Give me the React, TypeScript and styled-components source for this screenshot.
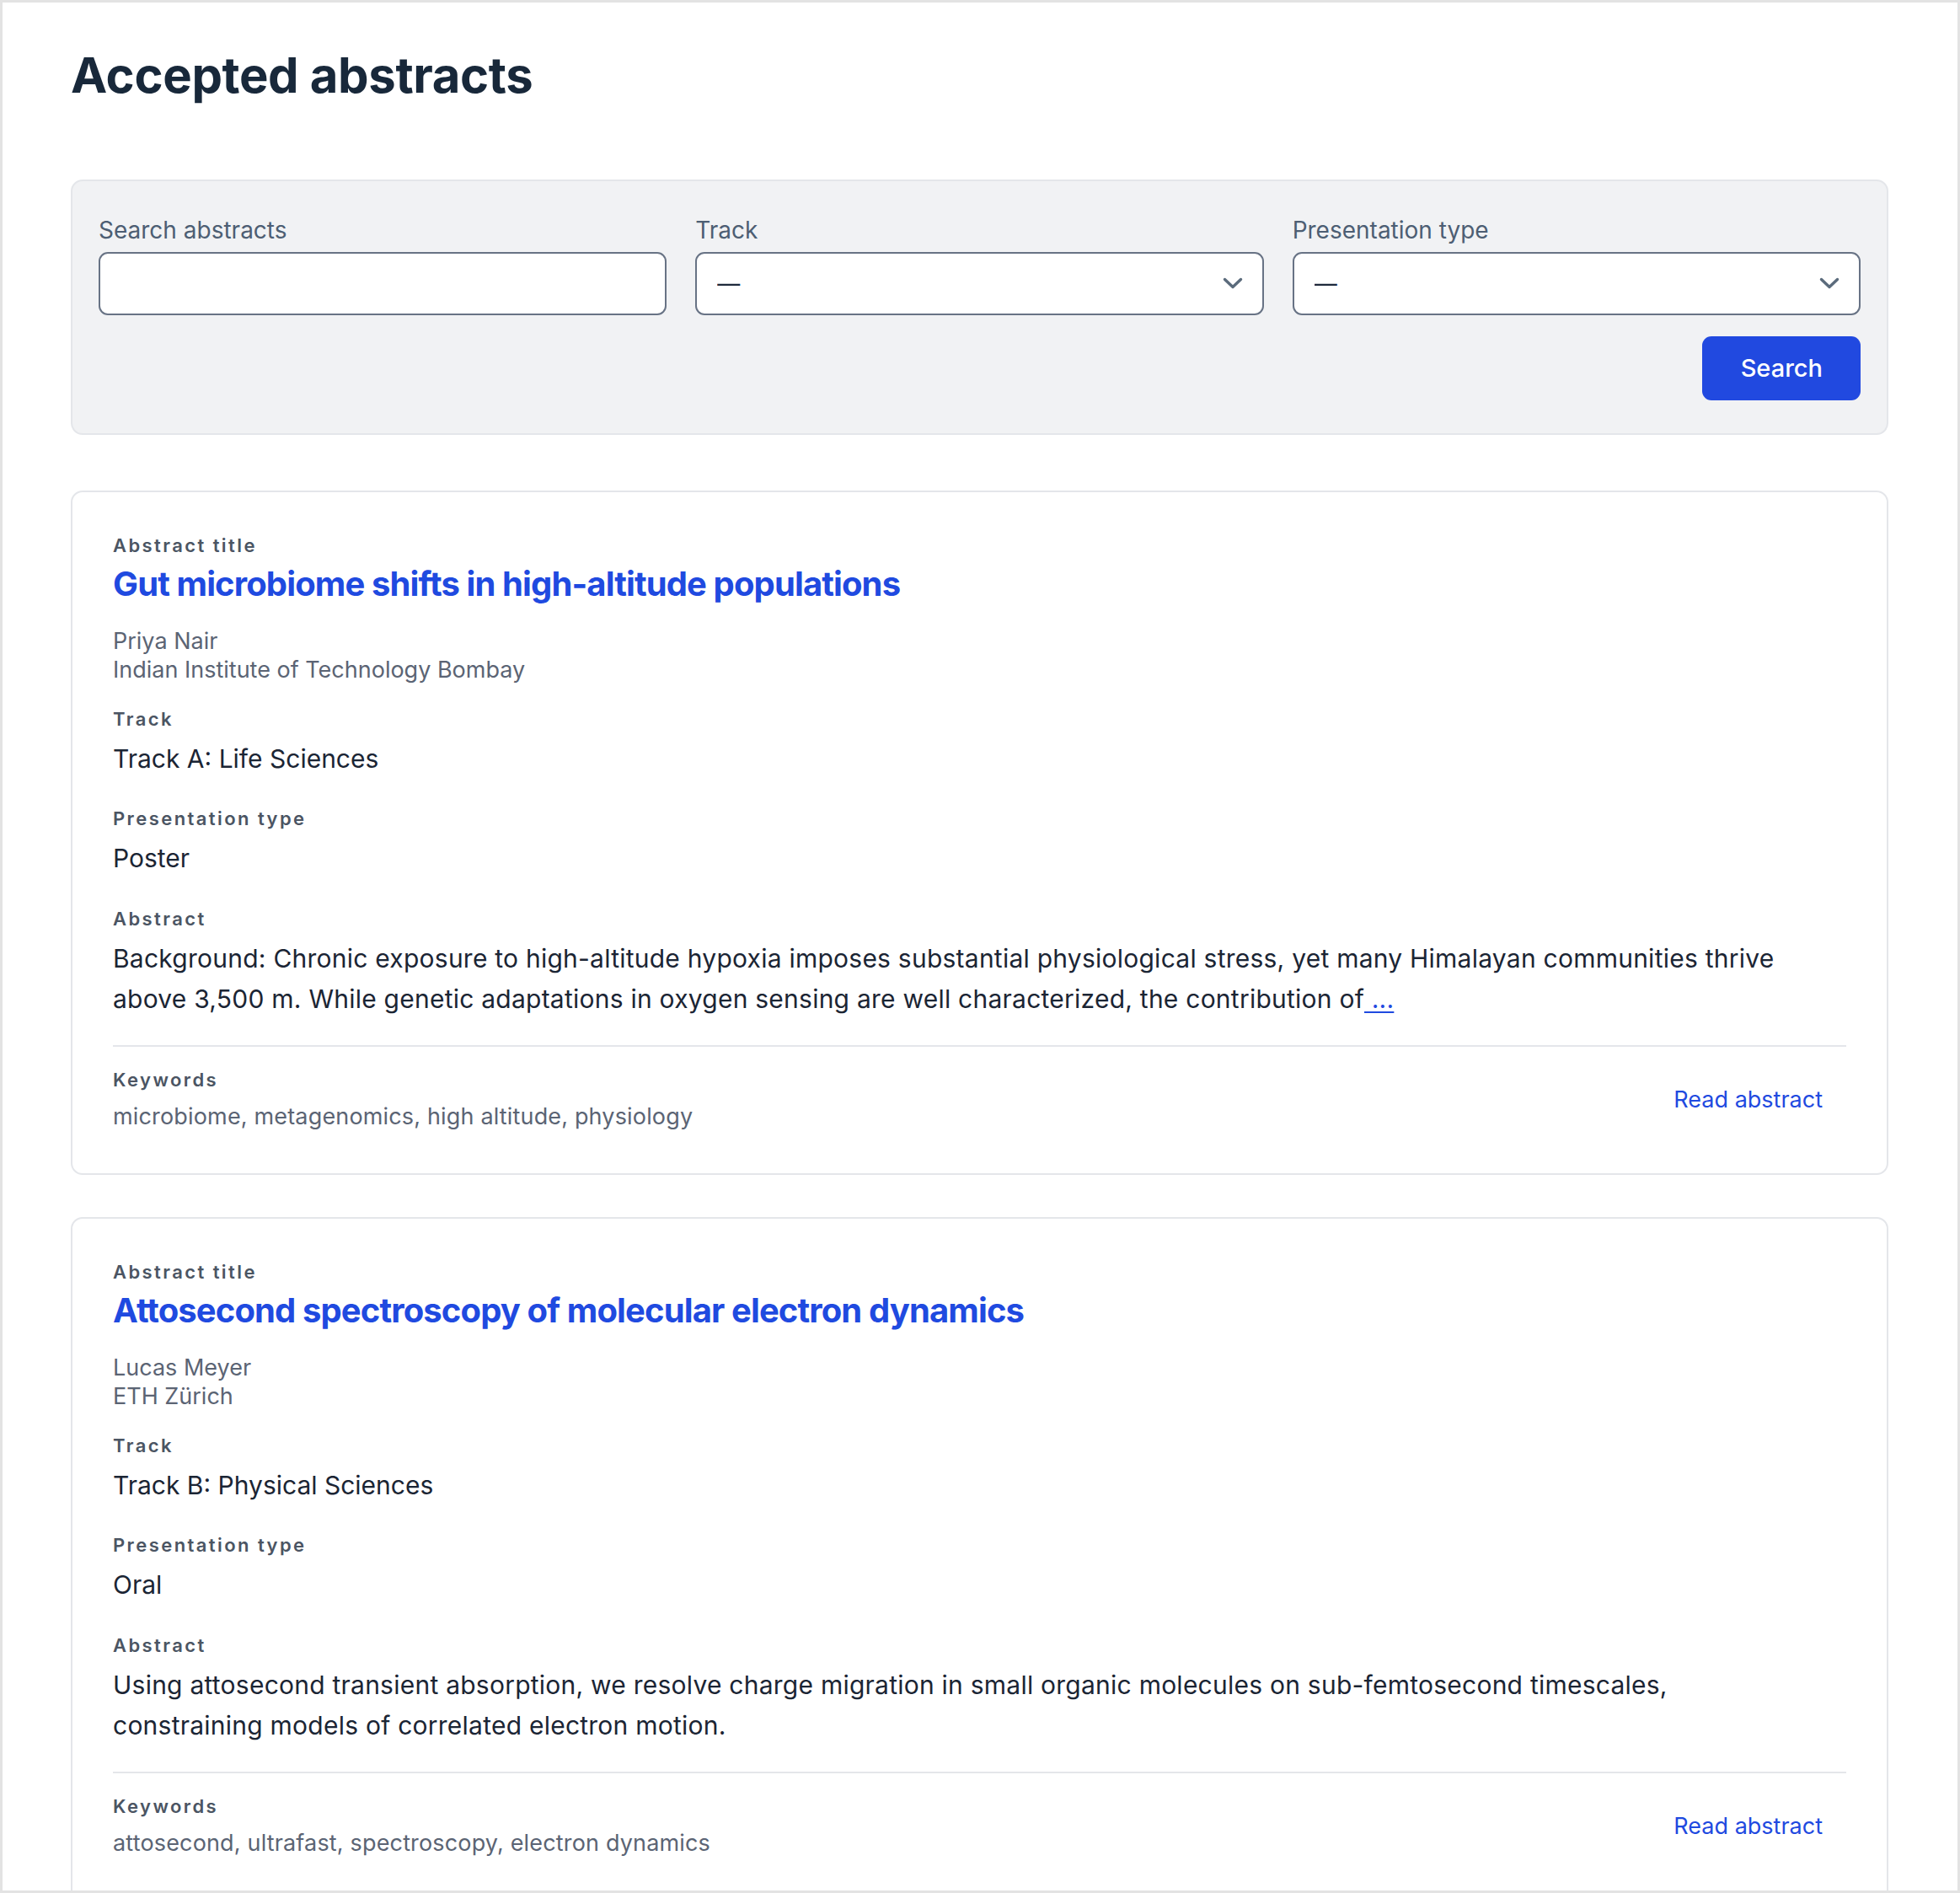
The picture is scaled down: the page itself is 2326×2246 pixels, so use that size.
import React from "react";
import styled, { createGlobalStyle } from "styled-components";

const Global = createGlobalStyle`
  html, body { margin: 0; padding: 0; background: #ffffff; }
  * { box-sizing: border-box; }
  body { font-family: Inter, "Noto Sans", "Liberation Sans", sans-serif; }
`;

const Frame = styled.div`
  height: 100vh;
  border: 3px solid #e3e3e3;
  overflow: hidden;
  background: #ffffff;
`;

const Page = styled.main`
  padding: 52px 82px 0 81px;
`;

const Heading = styled.h1`
  margin: 0;
  font-size: 58px;
  line-height: 1.2;
  font-weight: 700;
  letter-spacing: -0.006em;
  color: #18283a;
`;

const FilterPanel = styled.form`
  margin-top: 88px;
  background: #f1f2f4;
  border: 2px solid #e4e6ea;
  border-radius: 14px;
  padding: 40px 31px 39px;
`;

const FilterGrid = styled.div`
  display: grid;
  grid-template-columns: repeat(3, 1fr);
  column-gap: 34px;
`;

const Field = styled.label`
  display: flex;
  flex-direction: column;
  gap: 8px;
`;

const FieldLabel = styled.span`
  font-size: 28px;
  line-height: 36px;
  color: #4d5e73;
`;

const TextInput = styled.input`
  height: 75px;
  border: 2px solid #687385;
  border-radius: 11px;
  background: #ffffff;
  padding: 0 24px;
  font-family: inherit;
  font-size: 28px;
  color: #1e293b;
  outline: none;
`;

const SelectWrap = styled.div`
  position: relative;
`;

const Select = styled.select`
  appearance: none;
  -webkit-appearance: none;
  width: 100%;
  height: 75px;
  border: 2px solid #687385;
  border-radius: 11px;
  background: #ffffff;
  padding: 0 70px 0 24px;
  font-family: inherit;
  font-size: 27px;
  color: #1e293b;
  outline: none;
`;

const Chevron = styled.svg`
  position: absolute;
  right: 24px;
  top: 50%;
  transform: translateY(-50%);
  pointer-events: none;
`;

const ActionRow = styled.div`
  display: flex;
  justify-content: flex-end;
  margin-top: 25px;
`;

const SearchButton = styled.button`
  height: 76px;
  padding: 0 45px 0 46px;
  border: none;
  border-radius: 11px;
  background: #2149e0;
  color: #ffffff;
  font-family: inherit;
  font-size: 29px;
  font-weight: 500;
  cursor: pointer;
`;

const List = styled.section`
  margin-top: 66px;
  display: flex;
  flex-direction: column;
  gap: 50px;
`;

const Card = styled.article`
  border: 2px solid #e4e6ea;
  border-radius: 14px;
  padding: 48px 48px 47px 48px;
  background: #ffffff;
`;

const SmallLabel = styled.div`
  font-size: 22px;
  line-height: 30px;
  font-weight: 600;
  letter-spacing: 0.11em;
  color: #4b5563;
`;

const Title = styled.a`
  display: block;
  margin-top: 5px;
  font-size: 40px;
  line-height: 52px;
  font-weight: 700;
  letter-spacing: -0.022em;
  color: #1f4ae0;
  text-decoration: none;
`;

const Authors = styled.div`
  margin-top: 25px;
  font-size: 27px;
  line-height: 34px;
  color: #5b6474;
`;

const Group = styled.div<{ $gap: number }>`
  margin-top: ${(p) => p.$gap}px;
  display: flex;
  flex-direction: column;
  gap: 8px;
`;

const Value = styled.div`
  font-size: 30px;
  line-height: 48px;
  color: #1b2534;
`;

const AbstractText = styled.p`
  margin: 0;
  max-width: 1984px;
  font-size: 30px;
  line-height: 48px;
  letter-spacing: 0.008em;
  color: #1b2534;
`;

const More = styled.a`
  color: #1f4ae0;
  text-decoration: underline;
  text-decoration-thickness: 2px;
  text-underline-offset: 4px;
`;

const Footer = styled.div`
  margin-top: 31px;
  border-top: 2px solid #e4e6ea;
  padding-top: 24px;
  display: flex;
  align-items: center;
  justify-content: space-between;
`;

const Keywords = styled.div`
  display: flex;
  flex-direction: column;
  gap: 9px;
`;

const KeywordText = styled.div`
  font-size: 27px;
  line-height: 40px;
  letter-spacing: 0.006em;
  color: #5b6474;
`;

const ReadLink = styled.a`
  padding: 8px 28px;
  font-size: 27px;
  line-height: 40px;
  color: #1f4ae0;
  text-decoration: none;
`;

type Abstract = {
  title: string;
  author: string;
  affiliation: string;
  track: string;
  type: string;
  text: string;
  truncated: boolean;
  keywords: string;
};

const abstracts: Abstract[] = [
  {
    title: "Gut microbiome shifts in high-altitude populations",
    author: "Priya Nair",
    affiliation: "Indian Institute of Technology Bombay",
    track: "Track A: Life Sciences",
    type: "Poster",
    text:
      "Background: Chronic exposure to high-altitude hypoxia imposes substantial physiological stress, yet many Himalayan communities thrive above 3,500 m. While genetic adaptations in oxygen sensing are well characterized, the contribution of",
    truncated: true,
    keywords: "microbiome, metagenomics, high altitude, physiology",
  },
  {
    title: "Attosecond spectroscopy of molecular electron dynamics",
    author: "Lucas Meyer",
    affiliation: "ETH Zürich",
    track: "Track B: Physical Sciences",
    type: "Oral",
    text:
      "Using attosecond transient absorption, we resolve charge migration in small organic molecules on sub-femtosecond timescales, constraining models of correlated electron motion.",
    truncated: false,
    keywords: "attosecond, ultrafast, spectroscopy, electron dynamics",
  },
];

const ChevronIcon = () => (
  <Chevron width="26" height="18" viewBox="0 0 26 18" fill="none">
    <path d="M3.5 4.5 L13 13.5 L22.5 4.5" stroke="#5b6b7c" strokeWidth="3.4" strokeLinecap="round" strokeLinejoin="round" />
  </Chevron>
);

const SelectField = ({ label }: { label: string }) => (
  <Field>
    <FieldLabel>{label}</FieldLabel>
    <SelectWrap>
      <Select defaultValue="">
        <option value="">—</option>
      </Select>
      <ChevronIcon />
    </SelectWrap>
  </Field>
);

const AbstractCard = ({ a }: { a: Abstract }) => (
  <Card>
    <SmallLabel>Abstract title</SmallLabel>
    <Title href="#">{a.title}</Title>
    <Authors>
      <div>{a.author}</div>
      <div>{a.affiliation}</div>
    </Authors>
    <Group $gap={26}>
      <SmallLabel>Track</SmallLabel>
      <Value>{a.track}</Value>
    </Group>
    <Group $gap={32}>
      <SmallLabel>Presentation type</SmallLabel>
      <Value>{a.type}</Value>
    </Group>
    <Group $gap={33}>
      <SmallLabel>Abstract</SmallLabel>
      <AbstractText>
        {a.text}
        {a.truncated && <More href="#"> ...</More>}
      </AbstractText>
    </Group>
    <Footer>
      <Keywords>
        <SmallLabel>Keywords</SmallLabel>
        <KeywordText>{a.keywords}</KeywordText>
      </Keywords>
      <ReadLink href="#">Read abstract</ReadLink>
    </Footer>
  </Card>
);

export default function App() {
  return (
    <Frame>
      <Global />
      <Page>
        <Heading>Accepted abstracts</Heading>
        <FilterPanel onSubmit={(e) => e.preventDefault()}>
          <FilterGrid>
            <Field>
              <FieldLabel>Search abstracts</FieldLabel>
              <TextInput type="text" />
            </Field>
            <SelectField label="Track" />
            <SelectField label="Presentation type" />
          </FilterGrid>
          <ActionRow>
            <SearchButton type="submit">Search</SearchButton>
          </ActionRow>
        </FilterPanel>
        <List>
          {abstracts.map((a) => (
            <AbstractCard key={a.title} a={a} />
          ))}
        </List>
      </Page>
    </Frame>
  );
}
